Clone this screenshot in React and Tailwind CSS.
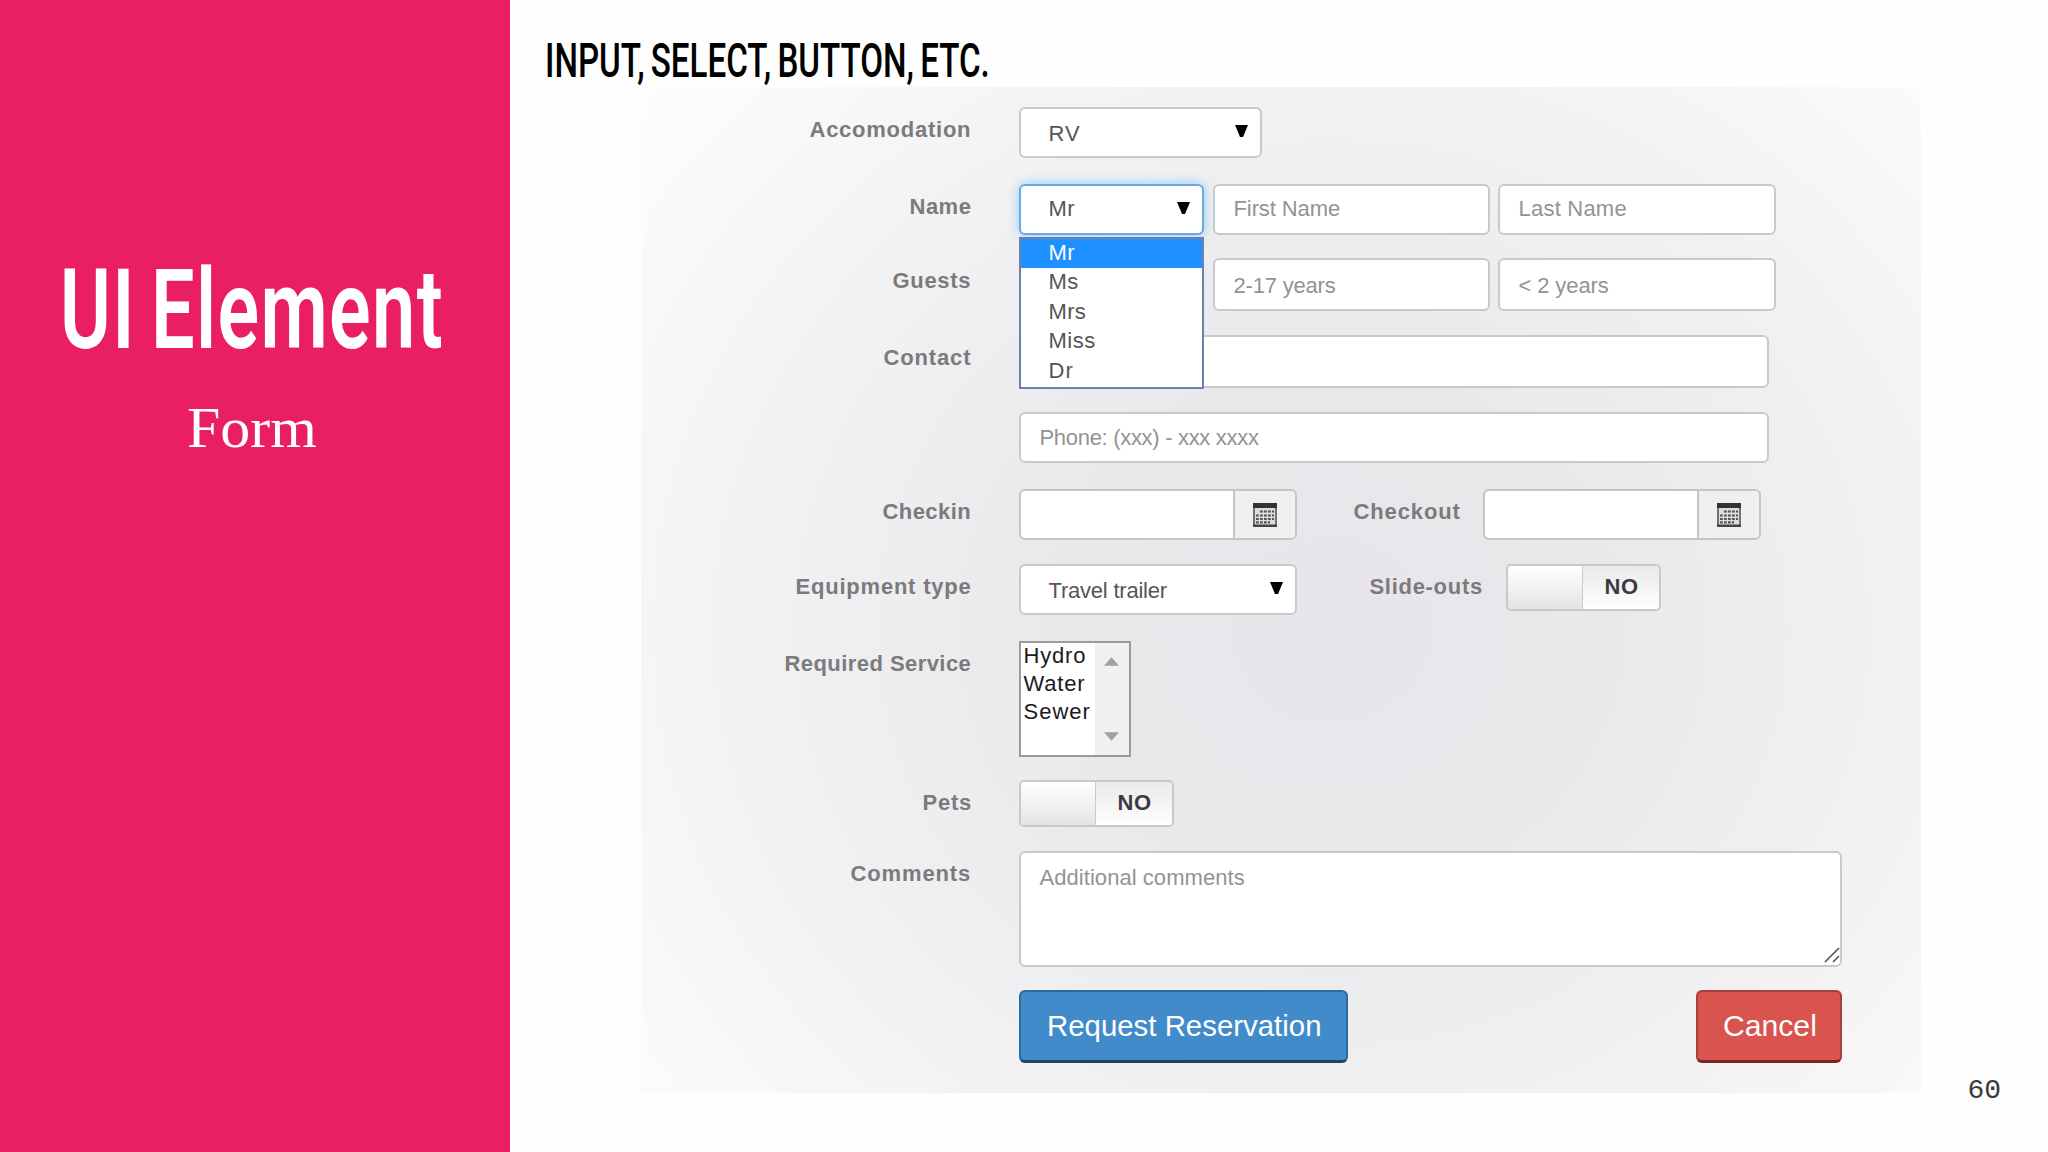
import { useLayoutEffect, useRef, useState } from "react";

// Text tuned to an exact width, by letter spacing or by squeezing the glyphs
function FitText({ width, squeeze = false, className = "", children }) {
    const ref = useRef(null);
    const [style, setStyle] = useState({});

    useLayoutEffect(() => {
        const natural = ref.current.offsetWidth;
        if (squeeze) {
            setStyle({ transform: `scaleX(${width / natural})` });
        } else {
            setStyle({ letterSpacing: `${(width - natural) / children.length}px` });
        }
    }, []);

    return (
        <span className={`inline-block text-left ${className}`} style={{ width }}>
            <span
                ref={ref}
                className="inline-block origin-left whitespace-pre"
                style={style}
            >
                {children}
            </span>
        </span>
    );
}

function Row({ label, labelWidth, className, children }) {
    return (
        <div className={`flex items-start ${className}`}>
            <div className="mt-2 mr-[47px] flex w-[331px] shrink-0 justify-end font-bold leading-[30px] text-[#7b7b7d]">
                {label && <FitText width={labelWidth}>{label}</FitText>}
            </div>
            {children}
        </div>
    );
}

function InlineLabel({ width, className, children }) {
    return (
        <div className={`mt-2 font-bold leading-[30px] text-[#7b7b7d] ${className}`}>
            <FitText width={width}>{children}</FitText>
        </div>
    );
}

function Field({ placeholder, textWidth, className = "" }) {
    return (
        <div
            className={`rounded-md border-2 border-[#c9c9cb] bg-white pl-[19px] leading-[46px] text-[#939393] ${className}`}
        >
            {placeholder && <FitText width={textWidth}>{placeholder}</FitText>}
        </div>
    );
}

function Select({ value, textWidth, className }) {
    return (
        <div
            className={`flex items-start justify-between rounded-md border-2 bg-white pr-3 pl-7 text-[#555] ${className}`}
        >
            <FitText width={textWidth}>{value}</FitText>
            <svg className="mt-4 h-3 w-[13px]" viewBox="0 0 13 12">
                <path d="M0 0H13L8 12H5Z" fill="#000" />
            </svg>
        </div>
    );
}

function CalendarIcon() {
    return (
        <svg className="h-6 w-6" viewBox="0 0 24 24">
            <rect x="1" y="1" width="22" height="22" fill="#dcdcde" stroke="#56565a" strokeWidth="1.6" />
            <rect x="0" y="0" width="24" height="5" fill="#333337" />
            <rect x="0" y="21.5" width="24" height="2.5" fill="#444448" />
            <path
                d="M7 8.5H21M3 12.5H21M3 16H21M3 19.3H17"
                stroke="#555559"
                strokeWidth="2.2"
                strokeDasharray="2.8 1.2"
            />
        </svg>
    );
}

function DateField() {
    return (
        <div className="flex h-[51px] w-[278px] overflow-hidden rounded-md border-2 border-[#c5c5c7] bg-white">
            <div className="flex-1" />
            <div className="flex w-[62px] items-center justify-center border-l-2 border-[#c5c5c7] bg-[#efefef]">
                <CalendarIcon />
            </div>
        </div>
    );
}

function Toggle() {
    return (
        <div className="flex h-[47px] w-[155px] overflow-hidden rounded-[5px] border-2 border-[#c9c9cb]">
            <div className="w-[75px] border-r border-[#c9c9cb] bg-linear-to-b from-white to-[#e4e3e6]" />
            <div className="flex-1 bg-linear-to-b from-[#e9e9ea] to-white pl-[22px] font-bold leading-[42px] text-[#3c3a3e]">
                <FitText width={34}>NO</FitText>
            </div>
        </div>
    );
}

const titles = [
    { name: "Mr", width: 27 },
    { name: "Ms", width: 30 },
    { name: "Mrs", width: 38 },
    { name: "Miss", width: 47 },
    { name: "Dr", width: 25 },
];

const services = [
    { name: "Hydro", width: 63 },
    { name: "Water", width: 62 },
    { name: "Sewer", width: 67 },
];

function TitleMenu() {
    return (
        <div className="absolute top-[53px] left-0 z-10 h-[152px] w-[185px] border-2 border-[#6f7fb2] bg-white">
            {titles.map((title, index) => (
                <div
                    key={title.name}
                    className={
                        index === 0
                            ? "h-[29px] bg-[#1e90ff] pl-7 leading-[27px] text-white"
                            : "h-[29.6px] pl-7 leading-[27px] text-[#555]"
                    }
                >
                    <FitText width={title.width}>{title.name}</FitText>
                </div>
            ))}
        </div>
    );
}

function ReservationForm() {
    return (
        <div className="ml-[131px] h-[1006px] w-[1280px] shrink-0 bg-[radial-gradient(ellipse_62%_72%_at_54%_54%,#e7e5e9_0%,#e9e8eb_35%,#f0eff1_65%,#f6f6f6_88%,#fcfdfc_115%)] pt-5 font-['Liberation_Sans',Arial,sans-serif] text-[22px]">
            <Row label="Accomodation" labelWidth={162} className="h-[77px]">
                <Select value="RV" textWidth={32} className="h-[51px] w-[243px] border-[#c9c9cb] leading-[49px]" />
            </Row>

            <Row label="Name" labelWidth={62} className="h-[74px]">
                <div className="relative">
                    <Select
                        value="Mr"
                        textWidth={27}
                        className="h-[51px] w-[185px] border-[#66a9e4] leading-[46px] shadow-[0_0_12px_rgba(102,190,243,0.7)]"
                    />
                    <TitleMenu />
                </div>
                <Field placeholder="First Name" textWidth={107} className="ml-[9px] h-[51px] w-[277px]" />
                <Field placeholder="Last Name" textWidth={108} className="ml-2 h-[51px] w-[278px]" />
            </Row>

            <Row label="Guests" labelWidth={79} className="h-[77px]">
                <Field className="h-[53px] w-[185px]" />
                <Field placeholder="2-17 years" textWidth={102} className="ml-[9px] h-[53px] w-[277px] pt-[3px]" />
                <Field placeholder="< 2 years" textWidth={90} className="ml-2 h-[53px] w-[278px] pt-[3px]" />
            </Row>

            <Row label="Contact" labelWidth={88} className="h-[77px]">
                <Field className="h-[53px] w-[750px]" />
            </Row>

            <Row className="h-[77px]">
                <Field placeholder="Phone: (xxx) - xxx xxxx" textWidth={219} className="h-[51px] w-[750px] pt-px" />
            </Row>

            <Row label="Checkin" labelWidth={89} className="h-[75px]">
                <DateField />
                <InlineLabel width={107} className="mr-[22px] ml-[57px]">
                    Checkout
                </InlineLabel>
                <DateField />
            </Row>

            <Row label="Equipment type" labelWidth={176} className="h-[77px]">
                <Select value="Travel trailer" textWidth={118} className="h-[51px] w-[278px] border-[#c9c9cb] leading-[50px]" />
                <InlineLabel width={113} className="mr-[23px] ml-[73px]">
                    Slide-outs
                </InlineLabel>
                <Toggle />
            </Row>

            <Row label="Required Service" labelWidth={187} className="h-[139px]">
                <div className="flex h-[116px] w-[112px] border-2 border-[#9b9b9d] bg-white">
                    <div className="w-[74px] pl-[3px] text-[#1d1a22]">
                        {services.map((service) => (
                            <div key={service.name} className="h-7 leading-[25px]">
                                <FitText width={service.width}>{service.name}</FitText>
                            </div>
                        ))}
                    </div>
                    <div className="flex flex-1 flex-col items-center justify-between bg-[#f0f0f0] pt-[14px] pb-[14px]">
                        <svg className="h-[9px] w-[15px]" viewBox="0 0 16 9">
                            <path d="M0 9L8 0L16 9Z" fill="#a0a0a0" />
                        </svg>
                        <svg className="h-[9px] w-[15px]" viewBox="0 0 16 9">
                            <path d="M0 0L8 9L16 0Z" fill="#a0a0a0" />
                        </svg>
                    </div>
                </div>
            </Row>

            <Row label="Pets" labelWidth={49} className="h-[71px]">
                <Toggle />
            </Row>

            <Row label="Comments" labelWidth={121} className="h-[138.5px]">
                <div className="relative h-[116px] w-[823px] rounded-md border-2 border-[#c9c9cb] bg-white pt-[10px] pl-[19px] leading-[30px] text-[#939393]">
                    <FitText width={205}>Additional comments</FitText>
                    <svg className="absolute right-0 bottom-0.5 h-4 w-4" viewBox="0 0 16 16">
                        <path d="M1 15L15 1M9 15L15 9" stroke="#555" strokeWidth="1.6" />
                    </svg>
                </div>
            </Row>

            <Row className="h-[73px]">
                <div className="flex w-[823px] justify-between text-[29.5px] leading-[67px] text-white">
                    <div className="h-[73px] w-[329px] rounded-md border-2 border-b-3 border-[#2f6a9c] border-b-[#1f4566] bg-[#428bca] pl-[26px]">
                        <FitText width={274} squeeze>
                            Request Reservation
                        </FitText>
                    </div>
                    <div className="h-[73px] w-[146px] rounded-md border-2 border-b-3 border-[#a8403d] border-b-[#762623] bg-[#d9534f] pl-[25px]">
                        <FitText width={94} squeeze>
                            Cancel
                        </FitText>
                    </div>
                </div>
            </Row>
        </div>
    );
}

function App() {
    return (
        <div className="flex h-[1152px] w-[2048px] overflow-hidden bg-[#fdfefd]">
            <aside className="w-[509.5px] shrink-0 bg-[#e91e63] pt-[244px] text-white">
                <h1 className="ml-[60px] font-['Roboto',sans-serif] text-[111px] font-semibold leading-[132px] tracking-[2px] [word-spacing:-8px]">
                    <FitText width={384} squeeze>
                        UI Element
                    </FitText>
                </h1>
                <p className="mt-[19px] ml-[187px] font-['Liberation_Serif',serif] text-[58px] leading-[66px]">
                    <FitText width={130} squeeze>
                        Form
                    </FitText>
                </p>
            </aside>

            <main className="flex-1">
                <h2 className="ml-[35px] h-[87px] pt-[32px] font-['Roboto',sans-serif] text-[49px] font-medium leading-[58px] text-black [word-spacing:-3px]">
                    <FitText width={445} squeeze>
                        INPUT, SELECT, BUTTON, ETC.
                    </FitText>
                </h2>
                <div className="flex items-end">
                    <ReservationForm />
                    <div className="-mb-[14px] ml-[47px] font-['Liberation_Mono',monospace] text-[28px] leading-[32px] text-[#3a3a3a]">
                        60
                    </div>
                </div>
            </main>
        </div>
    );
}

export default App;
